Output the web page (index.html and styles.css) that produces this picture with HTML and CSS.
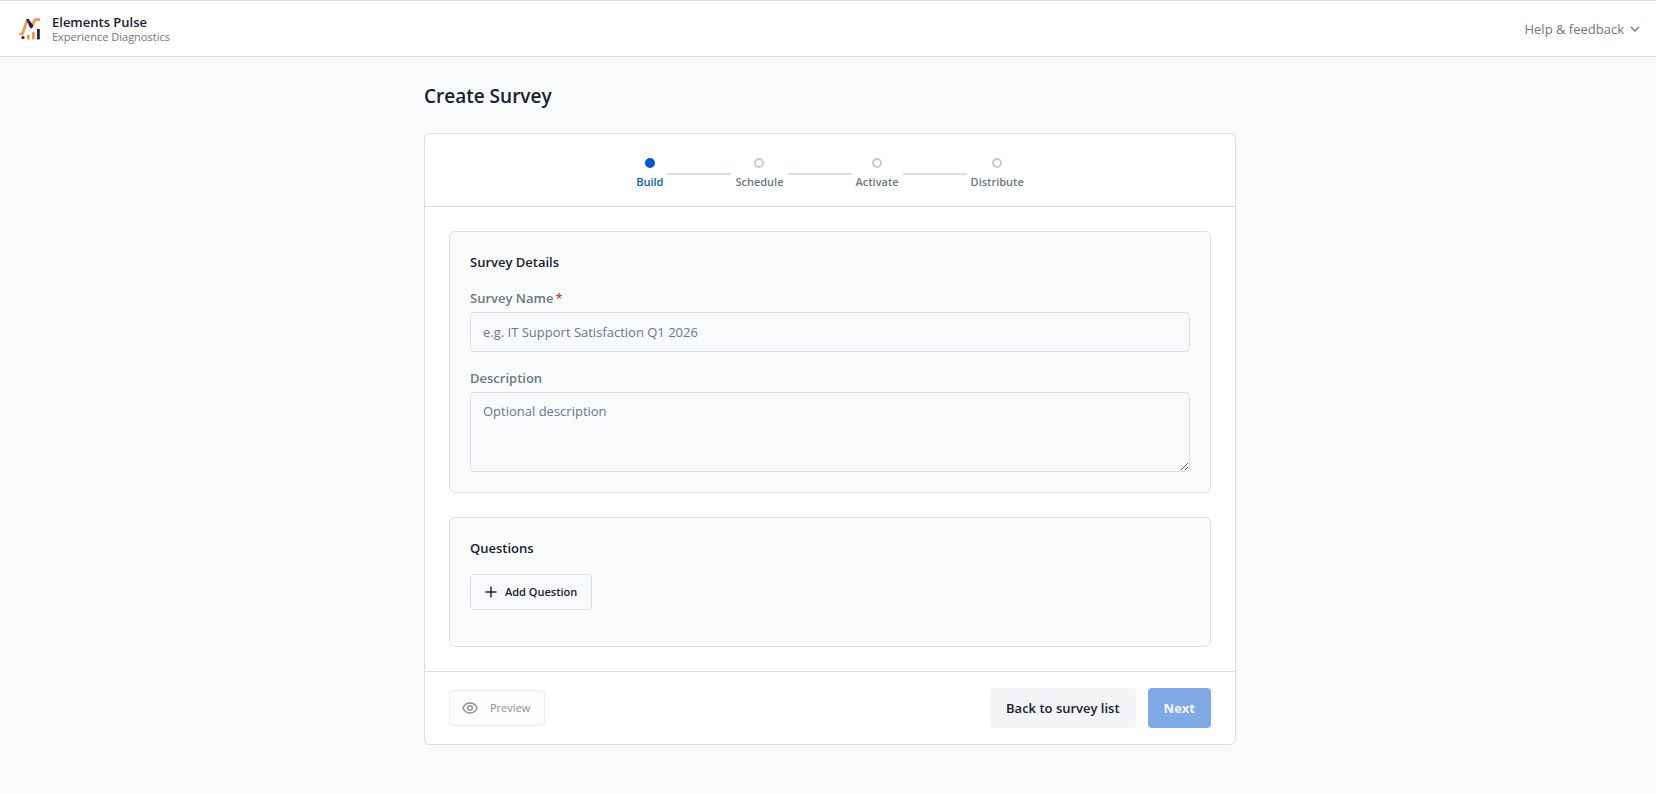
FILE: index.html
```html
<!DOCTYPE html>
<html lang="en">
<head>
    <meta charset="UTF-8">
    <meta name="viewport" content="width=device-width, initial-scale=1.0">
    <title>Create Survey - Elements Pulse</title>
    <link rel="stylesheet" href="styles.css">
</head>
<body>
    <header class="topbar">
        <a class="brand" href="#">
            <svg class="brand-logo" width="22" height="22" viewBox="0 0 22 22" fill="none" aria-hidden="true">
                <path d="M0.4 16H3.4L8 2.6" stroke="#ff9448" stroke-width="2.6"/>
                <path d="M12.2 9.6L16 1.6H21" stroke="#ff9448" stroke-width="2.6"/>
                <path d="M7 1L9.6 1L14.4 7.4L12.6 10.6L10.8 9.4Z" fill="#2a1f48"/>
                <circle cx="4" cy="19.6" r="1.6" fill="#2a1f48"/>
                <rect x="8" y="17" width="2.8" height="4.4" fill="#ff9448"/>
                <rect x="13" y="14" width="2.8" height="7.4" fill="#ff9448"/>
                <rect x="18" y="11" width="2.8" height="10.4" fill="#2a1f48"/>
            </svg>
            <span class="brand-text">
                <span class="brand-name">Elements Pulse</span>
                <span class="brand-sub">Experience Diagnostics</span>
            </span>
        </a>
        <button type="button" class="help-button">
            Help &amp; feedback
            <svg width="10" height="6" viewBox="0 0 10 6" fill="none" stroke="currentColor" stroke-width="1.4" aria-hidden="true">
                <path d="M1 1L5 5L9 1"/>
            </svg>
        </button>
    </header>

    <main class="page">
        <h1>Create Survey</h1>

        <form class="card">
            <ol class="stepper">
                <li class="step active"><span class="dot"></span>Build</li>
                <li class="connector" role="presentation"></li>
                <li class="step"><span class="dot"></span>Schedule</li>
                <li class="connector" role="presentation"></li>
                <li class="step"><span class="dot"></span>Activate</li>
                <li class="connector" role="presentation"></li>
                <li class="step"><span class="dot"></span>Distribute</li>
            </ol>

            <div class="card-body">
                <section class="panel">
                    <h2>Survey Details</h2>
                    <div class="form-group">
                        <label for="surveyName">Survey Name<span class="required">*</span></label>
                        <input type="text" id="surveyName" placeholder="e.g. IT Support Satisfaction Q1 2026" required>
                    </div>
                    <div class="form-group">
                        <label for="description">Description</label>
                        <textarea id="description" placeholder="Optional description"></textarea>
                    </div>
                </section>

                <section class="panel">
                    <h2>Questions</h2>
                    <div class="question-actions">
                        <button type="button" class="btn btn-small btn-add">
                            <svg width="12" height="12" viewBox="0 0 12 12" stroke="currentColor" stroke-width="1.4" aria-hidden="true">
                                <path d="M6 0.5V11.5M0.5 6H11.5"/>
                            </svg>
                            Add Question
                        </button>
                    </div>
                </section>
            </div>

            <div class="card-footer">
                <button type="button" class="btn btn-small btn-preview" disabled>
                    <svg width="16" height="12" viewBox="0 0 16 12" fill="none" stroke="currentColor" stroke-width="1.4" aria-hidden="true">
                        <path d="M1 6C2.4 2.8 4.9 1 8 1S13.6 2.8 15 6C13.6 9.2 11.1 11 8 11S2.4 9.2 1 6Z"/>
                        <circle cx="8" cy="6" r="2.3"/>
                    </svg>
                    Preview
                </button>
                <div class="footer-actions">
                    <button type="button" class="btn btn-secondary">Back to survey list</button>
                    <button type="submit" class="btn btn-primary" disabled>Next</button>
                </div>
            </div>
        </form>
    </main>
</body>
</html>
```
FILE: styles.css
```css
* {
    box-sizing: border-box;
}
body {
    margin: 0;
    font-family: "Segoe UI", "Open Sans", sans-serif;
    font-size: 13px;
    line-height: 20px;
    color: #17202e;
    background-color: #f8fafc;
}
h1, h2 {
    margin: 0;
    font-weight: 600;
}
h1 {
    margin-bottom: 23px;
    font-size: 19px;
    line-height: 28px;
}
h2 {
    margin-bottom: 16px;
    font-size: 13px;
    line-height: 20px;
}
button, input, textarea {
    font: inherit;
}
.topbar {
    display: flex;
    align-items: center;
    justify-content: space-between;
    height: 57px;
    padding: 0 16px 0 19px;
    border-top: 1px solid #d8dfe8;
    border-bottom: 1px solid #d8dfe8;
    background-color: #fff;
}
.brand {
    display: flex;
    align-items: center;
    gap: 11px;
    color: inherit;
    text-decoration: none;
}
.brand-text {
    display: flex;
    flex-direction: column;
}
.brand-name {
    font-weight: 600;
    line-height: 16px;
}
.brand-sub {
    font-size: 11px;
    line-height: 14px;
    color: #6b7785;
}
.help-button {
    display: flex;
    align-items: center;
    gap: 6px;
    padding: 0;
    border: none;
    background: none;
    color: #6b7785;
    cursor: pointer;
}
.page {
    max-width: 816px;
    margin: 0 auto;
    padding: 25px 0 48px 4px;
}
.card {
    border: 1px solid #d8dfe8;
    border-radius: 6px;
    background-color: #fff;
}
.stepper {
    display: flex;
    align-items: center;
    justify-content: center;
    gap: 4px;
    margin: 0;
    padding: 24px 24px 16px;
    border-bottom: 1px solid #d8dfe8;
    list-style: none;
}
.step {
    display: flex;
    flex-direction: column;
    align-items: center;
    gap: 6px;
    font-size: 11px;
    font-weight: 600;
    line-height: 16px;
    color: #6b7785;
}
.dot {
    width: 10px;
    height: 10px;
    border: 2px solid #c5c9d0;
    border-radius: 50%;
}
.step.active {
    color: #0055d4;
}
.step.active .dot {
    border-color: #0055d4;
    background-color: #0055d4;
}
.connector {
    width: 64px;
    height: 2px;
    background-color: #d8dfe8;
}
.card-body {
    display: flex;
    flex-direction: column;
    gap: 24px;
    padding: 24px;
}
.panel {
    padding: 20px;
    border: 1px solid #d8dfe8;
    border-radius: 6px;
    background-color: #fafcfb;
}
.form-group + .form-group {
    margin-top: 16px;
}
label {
    display: block;
    margin-bottom: 4px;
    font-weight: 600;
    color: #6b7785;
}
.required {
    margin-left: 2px;
    color: #e5383b;
}
input, textarea {
    display: block;
    width: 100%;
    padding: 8px 12px;
    border: 1px solid #d8dfe8;
    border-radius: 4px;
    color: inherit;
    background-color: #f8fafc;
}
input {
    height: 40px;
}
textarea {
    height: 80px;
    resize: vertical;
}
::placeholder {
    color: #6b7785;
}
.question-actions {
    margin-bottom: 16px;
}
.btn {
    display: flex;
    align-items: center;
    height: 40px;
    padding: 0 16px;
    border: none;
    border-radius: 4px;
    font-weight: 600;
    color: #17202e;
    cursor: pointer;
}
.btn-small {
    height: 36px;
    padding: 0 14px 0 12px;
    border: 1px solid #d8dfe8;
    font-size: 11px;
    background-color: #f8fafc;
}
.btn-add {
    gap: 8px;
    padding-left: 14px;
}
.btn-preview {
    gap: 12px;
    border-color: #eceff3;
    font-weight: 500;
    color: #8b8f96;
    background-color: #fcfcfd;
}
.btn-secondary {
    background-color: #f3f4f6;
}
.btn-primary {
    font-weight: 700;
    color: #f2f7fd;
    background-color: #80aae6;
}
.btn:disabled {
    cursor: default;
}
.card-footer {
    display: flex;
    align-items: center;
    justify-content: space-between;
    padding: 16px 24px;
    border-top: 1px solid #d8dfe8;
}
.footer-actions {
    display: flex;
    gap: 12px;
}
```
